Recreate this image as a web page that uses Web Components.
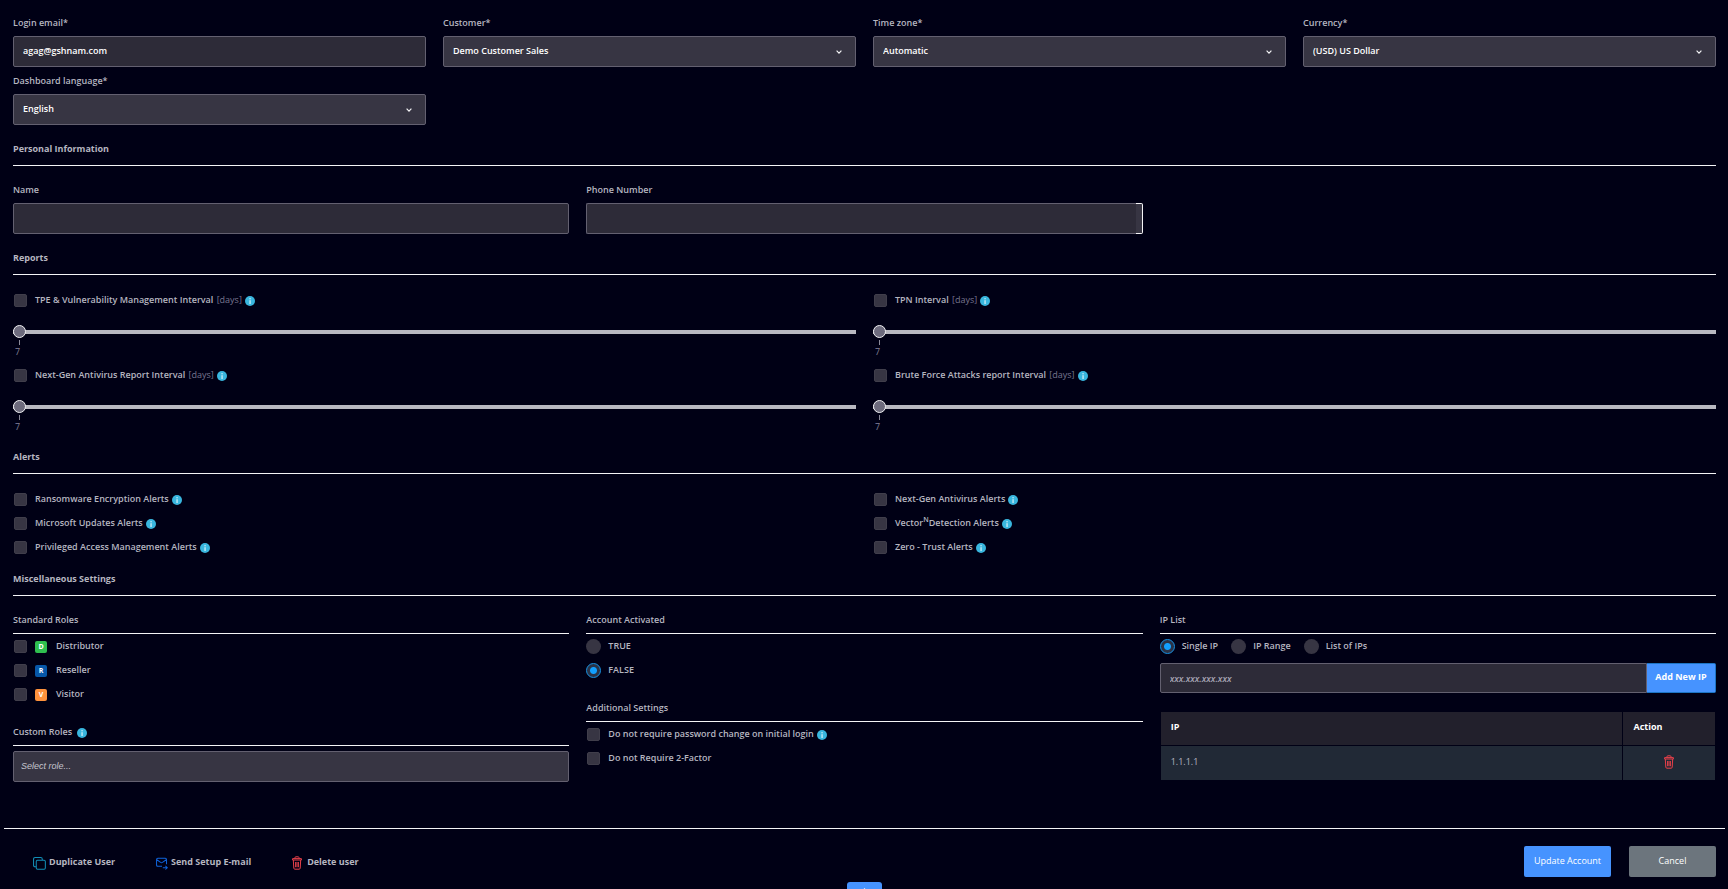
<!DOCTYPE html>
<html lang="en">
<head>
<meta charset="utf-8">
<title>Edit account</title>
<style>
  html { background: #000015; }
  body {
    margin: 0;
    background: #000015;
    color: #b6b6c0;
    font: 600 9px/12px "Open Sans", "Noto Sans", sans-serif;
    --line: #f4f4f6;
    --field: #2d2b38;
    --raised: #373543;
    --edge: #636070;
    --muted: #77758f;
    --accent: #4693ff;
  }
</style>
</head>
<body>
<account-form></account-form>

<script>
const ICONS = {
  info: '<svg width="10" height="10" viewBox="0 0 10 10"><circle cx="5" cy="5" r="5" fill="#39b6de"/><rect x="4.5" y="2.2" width="1.1" height="1.1" fill="#fff"/><rect x="4.5" y="4.2" width="1.1" height="3.8" fill="#e6f7fc"/></svg>',
  trash: '<svg width="10" height="14" viewBox="0 0 10 14" fill="none" stroke="#e8404a" stroke-width="1"><path d="M3 2.4V1.6Q3 .8 3.8.8H6.2Q7 .8 7 1.6V2.4M.6 2.6H9.4V4H.6ZM1.3 4L1.8 12.2Q1.9 13.2 2.9 13.2H7.1Q8.1 13.2 8.2 12.2L8.7 4M3.6 6V11.2M5 6V11.2M6.4 6V11.2"/></svg>',
  copy: '<svg width="13" height="13" viewBox="0 0 14 14" fill="none" stroke="#128fb8" stroke-width="1.1"><path d="M3.5 10.5H2.3Q.6 10.5.6 8.8V2.3Q.6.6 2.3.6H8.3Q10 .6 10 2.3V3.2"/><rect x="3.5" y="3.5" width="9.8" height="9.8" rx="1.4"/></svg>',
  mail: '<svg width="12" height="13" viewBox="0 0 13 13" fill="none" stroke="#0f63dc" stroke-width="1.1"><path d="M6.5 9.6H2Q.6 9.6.6 8.2V2.1Q.6.7 2 .7H10Q11.4.7 11.4 2.1V7.4M.9 2.4L5 5.3Q6 5.9 7 5.3L11.1 2.4M7.4 11.1H12M10.2 9.2L12.2 11.1L10.2 13"/></svg>',
  chevron: '<svg width="6" height="4" viewBox="0 0 6 4" fill="none" stroke="#f4f4f6" stroke-width="1.2"><path d="M.6 .7L3 3.1L5.4 .7"/></svg>',
  up: '<svg width="9" height="6" viewBox="0 0 9 6" fill="none" stroke="#fff" stroke-width="1.2"><path d="M.7 5.3L4.5 1L8.3 5.3"/></svg>'
};

const RESET = `
  * { box-sizing: border-box; }
  input, select, button { font: inherit; margin: 0; }
  svg { display: block; }
  label { cursor: pointer; }
  input[type=checkbox], input[type=radio] {
    appearance: none; flex: none; background: var(--raised);
  }
  input[type=checkbox] {
    width: 13px; height: 13px; margin: 0 1px; border-radius: 2px; border: 1px solid #403e4b;
  }
  input[type=radio] { width: 15px; height: 15px; border-radius: 50%; }
  input[type=radio]:checked {
    border: 1px solid #1893e4;
    background: radial-gradient(circle, #12a0ff 3px, #2a3347 4px);
  }`;

class Base extends HTMLElement {
  constructor() {
    super();
    this.attachShadow({ mode: "open" });
  }
  connectedCallback() {
    this.shadowRoot.innerHTML = `<style>${RESET}${this.css()}</style>${this.html()}`;
  }
  attr(name) { return this.getAttribute(name) || ""; }
}

customElements.define("ui-icon", class extends Base {
  css() { return `:host { display: inline-block; flex: none; }`; }
  html() { return ICONS[this.attr("name")]; }
});

/* Labelled text box or drop-down */
customElements.define("ui-field", class extends Base {
  css() {
    return `
    :host { display: block; min-width: 0; }
    label { display: block; margin-bottom: 7px; }
    .box { display: grid; align-items: center; }
    input, select {
      grid-area: 1 / 1; width: 100%; height: 31px; padding: 0 9px 2px;
      border: 1px solid var(--edge); border-radius: 2px;
      color: #fff; background: var(--field); outline: 0; appearance: none;
    }
    select { background: var(--raised); }
    ui-icon { grid-area: 1 / 1; justify-self: end; margin-right: 14px; pointer-events: none; }
    :host([tip]) .box { grid-template-columns: 1fr 7px; }
    :host([tip]) input { border-right: 0; border-radius: 2px 0 0 2px; }
    .tip {
      height: 31px; background: var(--raised);
      border: 1px solid var(--line); border-left: 0; border-radius: 0 2px 2px 0;
    }`;
  }
  html() {
    const control = this.hasAttribute("select")
      ? `<select id="c"><option>${this.attr("value")}</option></select><ui-icon name="chevron"></ui-icon>`
      : `<input id="c" type="${this.attr("type") || "text"}" value="${this.attr("value")}">`;
    return `<label for="c">${this.attr("label")}</label><div class="box">${control}${this.hasAttribute("tip") ? '<span class="tip"></span>' : ""}</div>`;
  }
});

/* Full-width section with a bold ruled title */
customElements.define("ui-section", class extends Base {
  css() {
    return `
    :host { display: block; margin-top: 18px; }
    h2 { margin: 0 0 18px; padding-bottom: 10px; border-bottom: 1px solid var(--line); font: inherit; font-weight: 700; }`;
  }
  html() { return `<h2>${this.attr("title-text")}</h2><slot></slot>`; }
});

/* Ruled group inside a column */
customElements.define("ui-group", class extends Base {
  css() {
    return `
    :host { display: block; }
    h3 { display: flex; align-items: center; gap: 5px; height: 20px; margin: 0 0 5px; padding-bottom: 7px; border-bottom: 1px solid var(--line); font: inherit; }
    h3 ui-icon { margin-top: 2px; }
    .body { display: grid; gap: 9px; }`;
  }
  html() {
    const info = this.hasAttribute("info") ? '<ui-icon name="info"></ui-icon>' : "";
    return `<h3>${this.attr("title-text")}${info}</h3><div class="body"><slot></slot></div>`;
  }
});

customElements.define("ui-check", class extends Base {
  css() {
    return `
    :host { display: block; }
    label { display: flex; align-items: center; height: 15px; }
    .text { margin: 0 3px 1px 7px; }
    .days { margin-left: 1px; color: var(--muted); font-weight: 400; }
    ::slotted(sup) { font-size: 7px; line-height: 0; }
    .badge {
      width: 12px; height: 12px; margin: 0 2px 0 7px; border-radius: 2px;
      background: var(--badge); color: #fff; font-size: 7px; font-weight: 700; text-align: center;
    }`;
  }
  html() {
    const badge = this.hasAttribute("badge") ? `<span class="badge">${this.attr("badge")}</span>` : "";
    const days = this.hasAttribute("days") ? ' <span class="days">[days]</span>' : "";
    const info = this.hasAttribute("info") ? '<ui-icon name="info"></ui-icon>' : "";
    return `<label><input type="checkbox">${badge}<span class="text"><slot></slot>${days}</span>${info}</label>`;
  }
});

customElements.define("ui-range", class extends Base {
  css() {
    return `
    :host { display: block; }
    input { display: block; width: 100%; height: 13px; margin-top: 17px; appearance: none; background: none; }
    input::-webkit-slider-runnable-track { height: 4px; background: #b9b9c1; }
    input::-webkit-slider-thumb {
      appearance: none; width: 13px; height: 13px; margin-top: -5px; border-radius: 50%;
      background: #6d6b7d; border: 1px solid #f2f2f4;
    }
    .tick { width: 1px; height: 5px; margin: 2px 0 1px 6px; background: #8b8a99; }
    .min { display: block; padding-left: 2px; color: #83819a; font-weight: 400; }`;
  }
  html() {
    return `<ui-check days info><slot></slot></ui-check>
      <input type="range" min="7" max="90" value="7" aria-label="${this.textContent}">
      <div class="tick"></div><span class="min">7</span>`;
  }
});

customElements.define("ui-radios", class extends Base {
  css() {
    return `
    :host { display: grid; gap: 9px; }
    :host([inline]) { display: flex; gap: 13px; }
    label { display: flex; align-items: center; gap: 7px; height: 15px; }
    span { margin-bottom: 1px; }`;
  }
  html() {
    return this.attr("options").split("|").map(o =>
      `<label><input type="radio" name="r" ${o === this.attr("value") ? "checked" : ""}><span>${o}</span></label>`).join("");
  }
});

customElements.define("role-picker", class extends Base {
  css() {
    return `
    :host { display: block; }
    input {
      display: block; width: 100%; height: 31px; padding: 0 7px 2px; color: #fff;
      border: 1px solid var(--edge); border-radius: 2px; background: var(--raised);
    }
    input::placeholder { color: #c4c4cd; opacity: 1; font: italic 400 9px "Liberation Sans", Arial, sans-serif; }`;
  }
  html() { return `<input type="text" aria-label="Custom Roles" placeholder="Select role...">`; }
});

customElements.define("ip-editor", class extends Base {
  css() {
    return `
    :host { display: block; }
    .add { display: flex; margin-bottom: 19px; }
    .add input {
      flex: 1; min-width: 0; height: 30px; padding: 0 9px; color: #fff; background: var(--field);
      border: 1px solid var(--edge); border-radius: 2px 0 0 2px;
    }
    .add input::placeholder { color: #a9a7b6; opacity: 1; font-style: italic; }
    .add button {
      width: 69px; padding: 0 0 2px; color: #fff; background: var(--accent);
      border: 1px solid #1d75c4; border-left: 0; border-radius: 0 2px 2px 0; font-weight: 700;
    }
    .frame { padding: 0 1px; }
    table { width: 100%; border-collapse: collapse; }
    th { height: 33px; padding: 0 10px 2px; background: #22202c; color: #fff; text-align: left; font-weight: 700; border-bottom: 1px solid #000015; }
    td { height: 35px; padding: 0 10px 2px; background: #212936; font-weight: 400; }
    th + th, td + td { width: 92px; border-left: 1px solid #000015; }
    td button { display: block; margin: 0 auto; padding: 3px 0 0; border: 0; background: none; }`;
  }
  html() {
    return `<div class="add"><input type="text" aria-label="IP address" placeholder="xxx.xxx.xxx.xxx"><button type="button">Add New IP</button></div>
      <div class="frame"><table>
        <thead><tr><th>IP</th><th>Action</th></tr></thead>
        <tbody><tr><td>1.1.1.1</td><td><button type="button" aria-label="Delete IP"><ui-icon name="trash"></ui-icon></button></td></tr></tbody>
      </table></div>`;
  }
});

customElements.define("form-footer", class extends Base {
  css() {
    return `
    :host {
      display: flex; align-items: center; margin: 46px 3px 0 4px; padding: 17px 9px 12px 29px;
      border-top: 1px solid var(--line);
    }
    a { display: flex; align-items: center; gap: 3px; margin-right: 41px; color: inherit; text-decoration: none; font-weight: 700; }
    a ui-icon { margin-top: 3px; }
    .delete { gap: 5px; }
    button { width: 87px; height: 31px; padding: 0 0 2px; border: 0; border-radius: 2px; color: #fff; font-weight: 400; }
    .save { margin-left: auto; background: var(--accent); }
    .cancel { margin-left: 18px; background: #6c757d; }`;
  }
  html() {
    return `<a href="#duplicate"><ui-icon name="copy"></ui-icon>Duplicate User</a>
      <a href="#send"><ui-icon name="mail"></ui-icon>Send Setup E-mail</a>
      <a class="delete" href="#delete"><ui-icon name="trash"></ui-icon>Delete user</a>
      <button type="submit" class="save">Update Account</button>
      <button type="button" class="cancel">Cancel</button>`;
  }
});

/* Tab peeking over the lower edge of the window */
customElements.define("scroll-top", class extends Base {
  css() {
    return `
    :host { position: fixed; inset: auto 0 -27px; display: flex; justify-content: center; pointer-events: none; }
    button {
      width: 35px; height: 34px; padding: 6px 0 0; border: 0; border-radius: 3px; background: var(--accent);
      display: flex; justify-content: center; align-items: start; pointer-events: auto;
    }`;
  }
  html() { return `<button type="button" aria-label="Scroll to top"><ui-icon name="up"></ui-icon></button>`; }
});

customElements.define("account-form", class extends Base {
  css() {
    return `
    :host { display: block; }
    main { padding: 17px 12px 0 13px; }
    .four, .three, .two { display: grid; column-gap: 17px; }
    .four { grid-template-columns: repeat(4, minmax(0, 1fr)); row-gap: 8px; }
    .three { grid-template-columns: repeat(3, minmax(0, 1fr)); }
    .two { grid-template-columns: repeat(2, minmax(0, 1fr)); row-gap: 9px; }
    .two.ranges { row-gap: 10px; }
    .column { display: grid; align-content: start; gap: 24px; }`;
  }
  html() {
    return `
    <main>
      <div class="four">
        <ui-field label="Login email*" type="email" value="agag@gshnam.com"></ui-field>
        <ui-field select label="Customer*" value="Demo Customer Sales"></ui-field>
        <ui-field select label="Time zone*" value="Automatic"></ui-field>
        <ui-field select label="Currency*" value="(USD) US Dollar"></ui-field>
        <ui-field select label="Dashboard language*" value="English"></ui-field>
      </div>
      <ui-section title-text="Personal Information">
        <div class="three">
          <ui-field label="Name"></ui-field>
          <ui-field tip type="tel" label="Phone Number"></ui-field>
        </div>
      </ui-section>
      <ui-section title-text="Reports">
        <div class="two ranges">
          <ui-range>TPE &amp; Vulnerability Management Interval</ui-range>
          <ui-range>TPN Interval</ui-range>
          <ui-range>Next-Gen Antivirus Report Interval</ui-range>
          <ui-range>Brute Force Attacks report Interval</ui-range>
        </div>
      </ui-section>
      <ui-section title-text="Alerts">
        <div class="two">
          <ui-check info>Ransomware Encryption Alerts</ui-check>
          <ui-check info>Next-Gen Antivirus Alerts</ui-check>
          <ui-check info>Microsoft Updates Alerts</ui-check>
          <ui-check info>Vector<sup>N</sup>Detection Alerts</ui-check>
          <ui-check info>Privileged Access Management Alerts</ui-check>
          <ui-check info>Zero - Trust Alerts</ui-check>
        </div>
      </ui-section>
      <ui-section title-text="Miscellaneous Settings">
        <div class="three">
          <div class="column">
            <ui-group title-text="Standard Roles">
              <ui-check badge="D" style="--badge:#2fbf4f">Distributor</ui-check>
              <ui-check badge="R" style="--badge:#0757a8">Reseller</ui-check>
              <ui-check badge="V" style="--badge:#ff923c">Visitor</ui-check>
            </ui-group>
            <ui-group info title-text="Custom Roles"><role-picker></role-picker></ui-group>
          </div>
          <div class="column">
            <ui-group title-text="Account Activated"><ui-radios options="TRUE|FALSE" value="FALSE"></ui-radios></ui-group>
            <ui-group title-text="Additional Settings">
              <ui-check info>Do not require password change on initial login</ui-check>
              <ui-check>Do not Require 2-Factor</ui-check>
            </ui-group>
          </div>
          <ui-group title-text="IP List">
            <ui-radios inline options="Single IP|IP Range|List of IPs" value="Single IP"></ui-radios>
            <ip-editor></ip-editor>
          </ui-group>
        </div>
      </ui-section>
    </main>
    <form-footer></form-footer>
    <scroll-top></scroll-top>`;
  }
});
</script>
</body>
</html>
